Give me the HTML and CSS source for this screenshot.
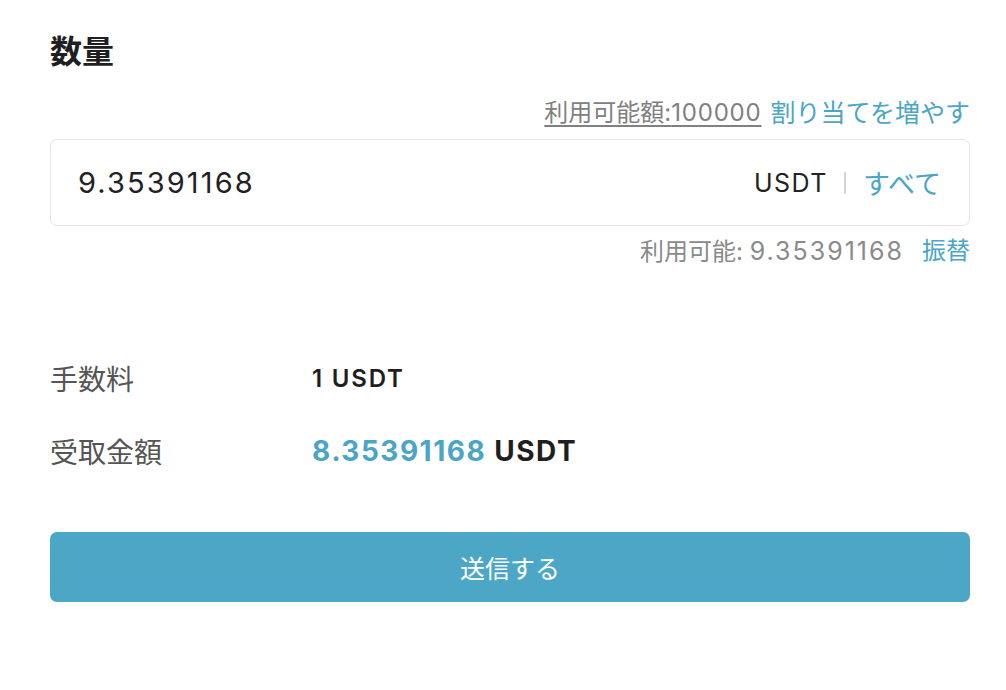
FILE: index.html
```html
<!DOCTYPE html>
<html lang="ja">
<head>
<meta charset="utf-8">
<link rel="stylesheet" href="styles.css">
</head>
<body>
<div class="page">
  <h2 class="title">数量</h2>
  <div class="quota">
    <span class="quota-label">利用可能額:<span class="num">100000</span></span>
    <a class="link">割り当てを増やす</a>
  </div>
  <div class="input-box">
    <span class="value">9.35391168</span>
    <div class="suffix">
      <span class="unit">USDT</span>
      <span class="sep"></span>
      <a class="link all">すべて</a>
    </div>
  </div>
  <div class="avail">
    <span class="avail-text">利用可能: <span class="num">9.35391168</span></span>
    <a class="link">振替</a>
  </div>
  <div class="rows">
    <div class="row">
      <span class="label">手数料</span>
      <span class="fee">1 USDT</span>
    </div>
    <div class="row">
      <span class="label">受取金額</span>
      <span class="receive"><span class="amt">8.35391168</span> USDT</span>
    </div>
  </div>
  <button class="submit">送信する</button>
</div>
</body>
</html>
```
FILE: styles.css
```css
* { box-sizing: border-box; }
body {
  margin: 0;
  background: #fff;
  font-family: Inter, "Noto Sans CJK JP", sans-serif;
  color: #222;
}
.page {
  width: 920px;
  margin-left: 50px;
  padding-top: 30px;
}
.title {
  margin: 0;
  font-size: 32px;
  line-height: 44px;
  font-weight: 700;
  color: #1f1f1f;
}
.quota {
  margin-top: 23px;
  display: flex;
  justify-content: flex-end;
  gap: 9px;
  font-size: 25px;
  line-height: 32px;
}
.quota-label {
  color: #808080;
  text-decoration: underline;
  text-underline-offset: 4px;
  text-decoration-thickness: 2px;
  font-size: 24px;
}
.quota-label .num {
  letter-spacing: 0.8px;
}
.link {
  color: #4aa5c6;
  cursor: pointer;
}
.input-box {
  margin-top: 10px;
  height: 87px;
  border: 1px solid #e6e6e6;
  border-radius: 7px;
  display: flex;
  align-items: center;
  justify-content: space-between;
  padding: 0 28px 0 27px;
}
.value {
  font-size: 29px;
  letter-spacing: 2.1px;
  color: #222;
}
.suffix {
  display: flex;
  align-items: center;
}
.unit {
  font-size: 25px;
  letter-spacing: 1.5px;
  color: #222;
}
.sep {
  width: 2px;
  height: 22px;
  background: #d0d4da;
  margin: 0 17px 0 16px;
}
.all {
  font-size: 27px;
}
.avail {
  margin-top: 9px;
  display: flex;
  justify-content: flex-end;
  gap: 18px;
  font-size: 24px;
  line-height: 32px;
}
.avail-text {
  color: #8a8a8a;
}
.avail-text .num {
  font-size: 25px;
  letter-spacing: 2px;
}
.rows {
  margin-top: 92px;
  display: flex;
  flex-direction: column;
  gap: 37px;
}
.row {
  display: flex;
  align-items: center;
  height: 36px;
}
.label {
  width: 262px;
  font-size: 28px;
  color: #555;
}
.fee {
  font-size: 24px;
  font-weight: 600;
  letter-spacing: 1.8px;
  color: #1f1f1f;
}
.receive {
  font-size: 28px;
  font-weight: 700;
  letter-spacing: 1.5px;
  color: #1f1f1f;
}
.amt {
  color: #4aa5c6;
}
.submit {
  display: block;
  margin-top: 63px;
  width: 100%;
  height: 70px;
  border: none;
  border-radius: 7px;
  background: #4ca7c6;
  color: #fff;
  font-family: Inter, "Noto Sans CJK JP", sans-serif;
  font-size: 25px;
}
```
